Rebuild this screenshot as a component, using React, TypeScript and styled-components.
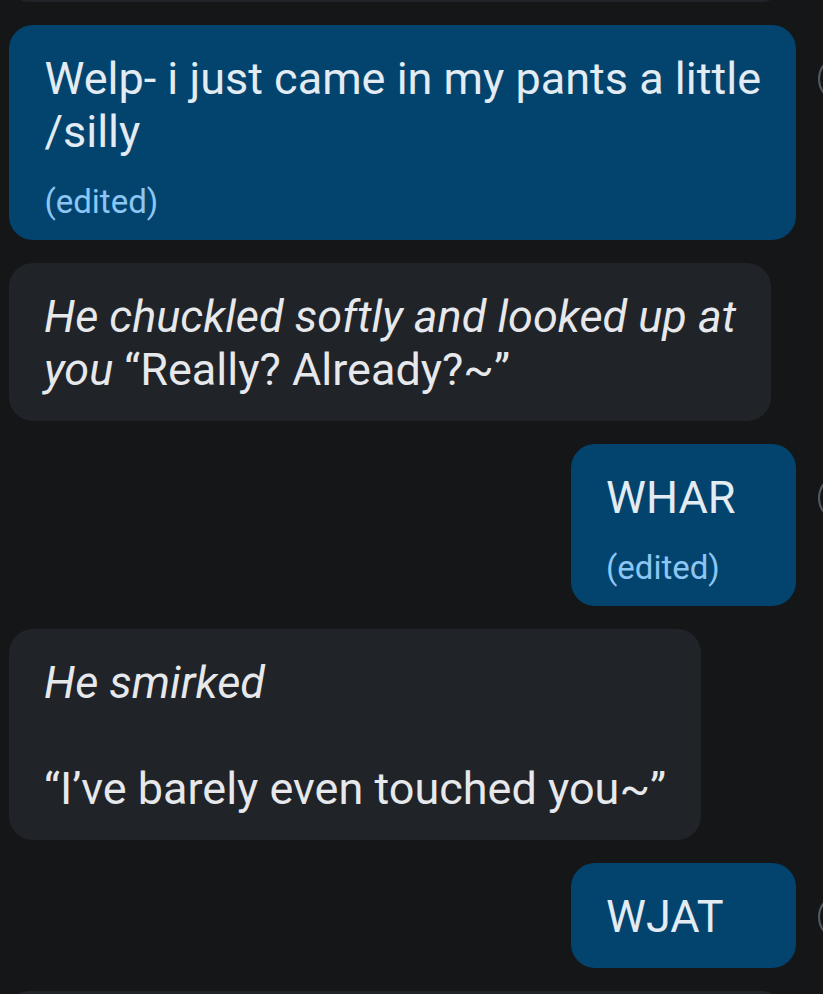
import React from 'react';
import styled, { createGlobalStyle } from 'styled-components';

const GlobalStyle = createGlobalStyle`
  html,
  body {
    margin: 0;
    padding: 0;
    background: #141618;
    overflow: hidden;
  }
  body {
    font-family: Roboto, 'Noto Sans', sans-serif;
  }
`;

const Thread = styled.div`
  width: 823px;
  height: 994px;
  overflow: hidden;
  display: flex;
  flex-direction: column;
  gap: 23px;
`;

const Peek = styled.div<{ $top?: boolean }>`
  flex-shrink: 0;
  height: 40px;
  margin: ${(p) => (p.$top ? '-38px 41px 0 9px' : '0 41px 0 9px')};
  border-radius: 24px;
  background: #202328;
`;

const Row = styled.div<{ $out?: boolean }>`
  display: flex;
  align-items: flex-start;
  gap: 22px;
  flex-shrink: 0;
  justify-content: ${(p) => (p.$out ? 'flex-end' : 'flex-start')};
  padding-left: 9px;
  margin-right: ${(p) => (p.$out ? '-43px' : '0')};
`;

const Bubble = styled.div<{ $out?: boolean }>`
  box-sizing: border-box;
  min-width: 225px;
  padding: 27px 35px 25px;
  border-radius: 24px;
  background: ${(p) => (p.$out ? '#03446e' : '#202328')};
  color: ${(p) => (p.$out ? '#e3ebf3' : '#e6e8eb')};
  font-size: 45px;
  line-height: 53px;
  font-style: ${(p) => (p.$out ? 'normal' : 'italic')};
`;

const Line = styled.div`
  white-space: nowrap;
  min-height: 53px;
`;

const Upright = styled.span`
  font-style: normal;
`;

const Edited = styled.div`
  margin: 22px 0 -9px;
  font-size: 33px;
  line-height: 44px;
  color: #8cc6f4;
  font-style: normal;
`;

const Avatar = styled.div`
  flex-shrink: 0;
  box-sizing: border-box;
  width: 48px;
  height: 48px;
  margin-top: 30px;
  border-radius: 50%;
  border: 2px solid #55585d;
`;

type Message = {
  out?: boolean;
  lines: React.ReactNode[];
  edited?: boolean;
};

const messages: Message[] = [
  {
    out: true,
    lines: ['Welp- i just came in my pants a little', '/silly'],
    edited: true,
  },
  {
    lines: [
      'He chuckled softly and looked up at',
      <>
        you <Upright>“Really? Already?~”</Upright>
      </>,
    ],
  },
  { out: true, lines: ['WHAR'], edited: true },
  {
    lines: [
      'He smirked',
      '',
      <Upright>“I’ve barely even touched you~”</Upright>,
    ],
  },
  { out: true, lines: ['WJAT'] },
];

export default function App() {
  return (
    <>
      <GlobalStyle />
      <Thread>
        <Peek $top />
        {messages.map((m, i) => (
          <Row key={i} $out={m.out}>
            <Bubble $out={m.out}>
              {m.lines.map((line, j) => (
                <Line key={j}>{line}</Line>
              ))}
              {m.edited && <Edited>(edited)</Edited>}
            </Bubble>
            {m.out && <Avatar />}
          </Row>
        ))}
        <Peek />
      </Thread>
    </>
  );
}
